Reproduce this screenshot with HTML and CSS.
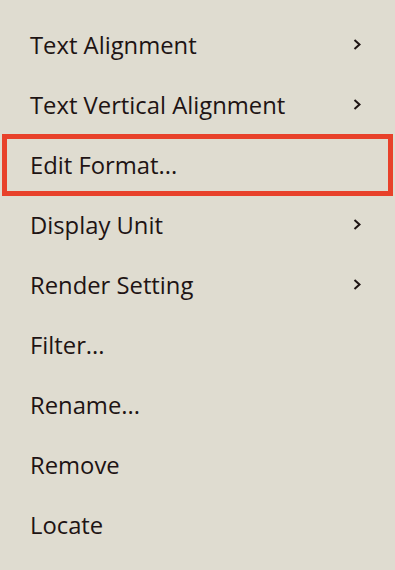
FILE: index.html
```html
<!DOCTYPE html>
<html lang="en">
<head>
    <meta charset="UTF-8">
    <meta name="viewport" content="width=device-width, initial-scale=1.0">
    <title>Context Menu</title>
    <link rel="stylesheet" href="styles.css">
</head>
<body>
    <ul class="menu">
        <li class="menu-item">Text Alignment
            <svg class="chevron" viewBox="0 0 8 11"><path d="M1.5 1 L6.5 5.5 L1.5 10"/></svg>
        </li>
        <li class="menu-item">Text Vertical Alignment
            <svg class="chevron" viewBox="0 0 8 11"><path d="M1.5 1 L6.5 5.5 L1.5 10"/></svg>
        </li>
        <li class="menu-item highlighted">Edit Format...</li>
        <li class="menu-item">Display Unit
            <svg class="chevron" viewBox="0 0 8 11"><path d="M1.5 1 L6.5 5.5 L1.5 10"/></svg>
        </li>
        <li class="menu-item">Render Setting
            <svg class="chevron" viewBox="0 0 8 11"><path d="M1.5 1 L6.5 5.5 L1.5 10"/></svg>
        </li>
        <li class="menu-item">Filter...</li>
        <li class="menu-item">Rename...</li>
        <li class="menu-item">Remove</li>
        <li class="menu-item">Locate</li>
    </ul>
</body>
</html>
```
FILE: styles.css
```css
body {
    margin: 0;
    padding: 0;
    height: 100vh;
    background-color: #dfdcd0;
    font-family: 'Open Sans', sans-serif;
    color: #1e1414;
    overflow: hidden;
}

.menu {
    list-style: none;
    margin: 0;
    padding: 15px 0 0;
}

.menu-item {
    height: 60px;
    display: flex;
    align-items: center;
    justify-content: space-between;
    padding: 0 31px 0 27px;
    margin: 0 3px;
    font-size: 23.8px;
    box-sizing: border-box;
}

.chevron {
    width: 8px;
    height: 11px;
    fill: none;
    stroke: #1e1414;
    stroke-width: 2;
    margin-top: -2px;
}

.highlighted {
    outline: 5px solid #e8412a;
    outline-offset: -4px;
}
```
